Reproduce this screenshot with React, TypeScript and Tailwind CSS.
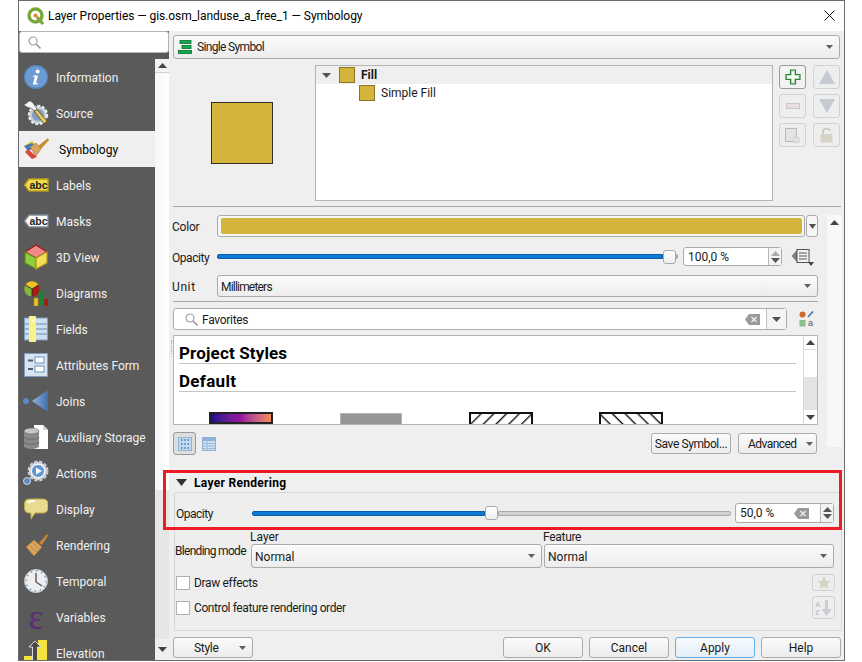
import type { ReactNode } from "react";

const GOLD = "#d4b43a";

const Caret = ({ up = false, color = "#505050", w = 9, h = 5 }: { up?: boolean; color?: string; w?: number; h?: number }) => (
  <svg width={w} height={h} viewBox="0 0 9 5" preserveAspectRatio="none" className="shrink-0">
    <path d={up ? "M4.5 0 L9 5 L0 5 Z" : "M0 0 L9 0 L4.5 5 Z"} fill={color} />
  </svg>
);

const Combo = ({ children, className = "" }: { children: ReactNode; className?: string }) => (
  <div className={`flex items-center rounded-[3px] border border-[#ababab] bg-linear-to-b from-[#fbfbfb] to-[#ececec] pr-[6px] ${className}`}>
    <div className="flex min-w-0 flex-1 items-center gap-[3px] whitespace-nowrap">{children}</div>
    <Caret color="#606060" w={7} h={4} />
  </div>
);

const Btn = ({ label, className = "" }: { label: string; className?: string }) => (
  <div className={`flex h-[21px] w-[80px] items-center justify-center whitespace-nowrap rounded-[3px] border border-[#ababab] bg-linear-to-b from-[#fbfbfb] to-[#ececec] ${className}`}>
    {label}
  </div>
);

const Slider = ({ fill, width }: { fill: number; width: string }) => (
  <div className={`flex h-[16px] shrink-0 items-center ${width}`}>
    <div className="h-[5px] rounded-l-[2px] border border-[#0b5da8] bg-[#0f7ad6]" style={{ width: fill }} />
    <div className="z-10 h-[14px] w-[13px] shrink-0 rounded-[3px] border border-[#a9a9a9] bg-linear-to-b from-white to-[#f0f0f0]" />
    <div className="h-[5px] flex-1 rounded-r-[2px] border border-[#a9a9a9] bg-[#d2d2d2]" />
  </div>
);

const Clear = () => (
  <svg width="15" height="11" viewBox="0 0 15 11" className="shrink-0">
    <path d="M4 0 H15 V11 H4 L0 5.5 Z" fill="#9a9a9a" />
    <path d="M6.5 3 L11.5 8 M11.5 3 L6.5 8" stroke="#efefef" strokeWidth="1.4" />
  </svg>
);

const SpinBox = ({ value, clear, className }: { value: string; clear?: boolean; className: string }) => (
  <div className={`flex items-stretch rounded-[3px] border border-[#ababab] bg-white ${className}`}>
    <div className="flex flex-1 items-center justify-between pl-[4px] pr-[11px]">
      <span className="whitespace-nowrap">{value}</span>
      {clear && <Clear />}
    </div>
    <div className="flex w-[13px] flex-col items-center justify-center gap-[2px] border-l border-[#b8b8b8] bg-[#f3f3f3]">
      <Caret up w={9} color={clear ? "#555" : "#aaa"} />
      <Caret w={9} color="#555" />
    </div>
  </div>
);

const ToolBtn = ({ children, active, className = "h-[24px] w-[27px]" }: { children: ReactNode; active?: boolean; className?: string }) => (
  <div className={`flex items-center justify-center rounded-[3px] border ${active ? "border-[#9a9a9a] bg-[#f2f2f2]" : "border-[#d2d2d2] bg-[#eeeeee]"} ${className}`}>
    {children}
  </div>
);

const Magnifier = () => (
  <svg width="13" height="13" viewBox="0 0 13 13" className="shrink-0">
    <circle cx="5" cy="5" r="4" fill="none" stroke="#9c9c9c" strokeWidth="1.2" />
    <path d="M8 8 L12.5 12.5" stroke="#9c9c9c" strokeWidth="1.6" />
  </svg>
);

const IconInfo = () => (
  <svg width="24" height="24" viewBox="0 0 24 24">
    <circle cx="12" cy="12" r="12" fill="#6b9bd0" />
    <circle cx="12" cy="12" r="11.5" fill="none" stroke="#4a7cb5" />
    <circle cx="13.6" cy="6.5" r="2" fill="#fff" />
    <path d="M9.5 10.5 H14 L12 18 H14 L13.4 19.5 H8.8 L10.8 12 H9.2 Z" fill="#fff" />
  </svg>
);

const IconSource = () => (
  <svg width="26" height="26" viewBox="0 0 26 26">
    <circle cx="15" cy="15" r="9" fill="#c3ccd6" stroke="#e8ecf0" strokeWidth="2.4" strokeDasharray="3 1.6" />
    <circle cx="15" cy="15" r="6" fill="#7f9ec0" />
    <path d="M1 3 C3 6 4 1 7 1 C11 2 11 6 14 9 L12 11 C9 8 6 8 4 7 C2 6 1 5 1 3 Z" fill="#f6f6f6" stroke="#333" strokeWidth="0.5" />
    <path d="M11 11 L14 9.5 L24 21 L21 24 Z" fill="#e3c565" stroke="#57481c" strokeWidth="0.8" />
  </svg>
);

const IconSymbology = () => (
  <svg width="27" height="22" viewBox="0 0 27 22">
    <path d="M1 8 L9 3 L14 8 L5 13 Z" fill="#e6c92e" />
    <path d="M1 8 L5 13 L13 9 L9 5 Z" fill="#3d78c0" />
    <path d="M2 14 L5 11 L14 19 L9 21 Z" fill="#d8473f" />
    <path d="M7 9 L13 5 L18 11 L13 18 Z" fill="#d9a45e" stroke="#a8753a" strokeWidth="0.6" />
    <path d="M15 8 L25 0 L26 2 L18 11 Z" fill="#c98a34" />
  </svg>
);

const IconTag = ({ bg, stroke }: { bg: string; stroke: string }) => (
  <svg width="25" height="14" viewBox="0 0 25 14">
    <path d="M5 1 H24 V13 H5 L0.5 7 Z" fill={bg} stroke={stroke} strokeWidth="1.4" strokeLinejoin="round" />
    <text x="14.5" y="10.5" textAnchor="middle" fontFamily="Liberation Sans, sans-serif" fontWeight="700" fontSize="10.5" fill="#222">abc</text>
  </svg>
);

const IconCube = () => (
  <svg width="24" height="26" viewBox="0 0 24 26">
    <path d="M12 1 L23 8 L12 14 L1 8 Z" fill="#f08a8a" stroke="#a31515" strokeWidth="1.2" />
    <path d="M1 8 L12 14 V25 L1 19 Z" fill="#8fce3a" stroke="#5b8a20" strokeWidth="1.2" />
    <path d="M23 8 L12 14 V25 L23 19 Z" fill="#f3dd5a" stroke="#b59a1e" strokeWidth="1.2" />
  </svg>
);

const IconDiagrams = () => (
  <svg width="24" height="25" viewBox="0 0 24 25">
    <circle cx="8" cy="8" r="7.5" fill="#a81c12" />
    <path d="M8 8 L1.5 4 A7.5 7.5 0 0 1 14.5 4 Z" fill="#eec425" />
    <path d="M8 8 L1.5 4 A7.5 7.5 0 0 0 8 15.5 Z" fill="#7fb83a" />
    <path d="M8 8 L14.5 4 M8 8 L1.5 4 M8 8 V15.5" stroke="#222" strokeWidth="0.8" />
    <rect x="10" y="17" width="4" height="8" fill="#eec425" stroke="#b18d12" strokeWidth="0.6" />
    <rect x="15" y="10" width="4" height="15" fill="#20813a" />
    <rect x="20" y="18" width="4" height="7" fill="#9b2418" />
  </svg>
);

const IconFields = () => (
  <svg width="24" height="26" viewBox="0 0 24 26">
    <rect x="0.5" y="2" width="23" height="22" fill="#cfdff0" stroke="#7f9dbf" />
    <path d="M1 8 H23 M1 13 H23 M1 18 H23" stroke="#8aa6c6" strokeWidth="1.4" />
    <rect x="5" y="0" width="7" height="26" fill="#f8f28a" />
    <rect x="7.5" y="3.5" width="2" height="2" fill="#fff" />
  </svg>
);

const IconForm = () => (
  <svg width="24" height="24" viewBox="0 0 24 24">
    <rect x="0.5" y="0.5" width="23" height="23" fill="#d7e3f0" stroke="#7f9dbf" />
    <path d="M4 7.5 H9 M4 16 H9" stroke="#4d5d70" strokeWidth="2" />
    <rect x="11" y="4" width="9" height="6" fill="#fff" stroke="#6f93bc" />
    <rect x="11" y="13" width="9" height="6" fill="#fff" stroke="#6f93bc" />
  </svg>
);

const IconJoins = () => (
  <svg width="26" height="24" viewBox="0 0 26 24">
    <circle cx="3" cy="12" r="3" fill="#5d8ac0" />
    <defs>
      <linearGradient id="joinCone" x1="0" x2="1" y1="0" y2="0">
        <stop offset="0" stopColor="#8fb2d8" />
        <stop offset="1" stopColor="#3f70ab" />
      </linearGradient>
    </defs>
    <path d="M9 12 L25 1 V23 Z" fill="url(#joinCone)" />
  </svg>
);

const IconStorage = () => (
  <svg width="26" height="26" viewBox="0 0 26 26">
    <path d="M11 1 H20 L25 6 V25 H11 Z" fill="#fff" />
    <path d="M20 1 V6 H25" fill="#d5d5d5" />
    <path d="M1 7 V22 C1 26 16 26 16 22 V7 Z" fill="#8a8a8a" />
    <ellipse cx="8.5" cy="7" rx="7.5" ry="3" fill="#c5c5c5" stroke="#666" strokeWidth="0.6" />
    <path d="M1 13 C1 16 16 16 16 13 M1 18 C1 21 16 21 16 18" fill="none" stroke="#5f5f5f" strokeWidth="0.8" />
  </svg>
);

const IconActions = () => (
  <svg width="26" height="26" viewBox="0 0 26 26">
    <circle cx="15" cy="11" r="9" fill="#e2e8ee" stroke="#c5ccd3" strokeWidth="3" strokeDasharray="3.2 1.6" />
    <circle cx="15" cy="11" r="6.5" fill="#5f95d2" stroke="#fff" strokeWidth="1" />
    <path d="M13 7.5 L19 11 L13 14.5 Z" fill="#fff" />
    <circle cx="4" cy="21" r="3.5" fill="#5d8ac0" stroke="#cdd8e4" strokeWidth="1" />
  </svg>
);

const IconDisplay = () => (
  <svg width="24" height="22" viewBox="0 0 24 22">
    <path d="M5 1 H19 C22 1 24 3 24 6 V10 C24 13 22 15 19 15 H11 L7 21 L7 15 H5 C2 15 0.5 13 0.5 10 V6 C0.5 3 2 1 5 1 Z" fill="#e8dc8f" stroke="#bba94a" />
    <path d="M4 5 C5 3 9 3 11 3" fill="none" stroke="#fff" strokeWidth="2" />
  </svg>
);

const IconRendering = () => (
  <svg width="23" height="23" viewBox="0 0 23 23">
    <path d="M14 9 L22 0 L23 1.5 L17 11 Z" fill="#c88a34" />
    <path d="M1 13 L9 6 L17 13 L9 22 Z" fill="#d9a45e" stroke="#a8753a" strokeWidth="0.8" />
    <path d="M5 12 L12 18 M8 9 L14 15" stroke="#b88444" strokeWidth="0.8" />
  </svg>
);

const IconClock = () => (
  <svg width="24" height="24" viewBox="0 0 24 24">
    <circle cx="12" cy="12" r="11.5" fill="#eeeeee" stroke="#bcc4cc" />
    <circle cx="12" cy="12" r="10" fill="none" stroke="#6e94c2" strokeWidth="1.5" strokeDasharray="1.4 3.8" />
    <path d="M12 4 V13 L18 17" fill="none" stroke="#555" strokeWidth="1.4" />
  </svg>
);

const IconVariables = () => (
  <span className="font-['Liberation_Serif',serif] text-[36px] leading-[20px] text-[#5c2d72]">ε</span>
);

const IconElevation = () => (
  <svg width="26" height="26" viewBox="0 0 26 26">
    <rect x="15" y="0" width="9" height="26" fill="#f5e23d" />
    <rect x="1" y="16" width="9" height="10" fill="#f5e23d" />
    <path d="M12 1 L18 7 H14.5 V26 H9.5 V7 H6 Z" fill="#4a4a4a" stroke="#e8e8e8" strokeWidth="0.9" />
  </svg>
);

const NAV: Array<{ label: string; icon: ReactNode }> = [
  { label: "Information", icon: <IconInfo /> },
  { label: "Source", icon: <IconSource /> },
  { label: "Symbology", icon: <IconSymbology /> },
  { label: "Labels", icon: <IconTag bg="#f2dc4a" stroke="#b59c1e" /> },
  { label: "Masks", icon: <IconTag bg="#ffffff" stroke="#7d8894" /> },
  { label: "3D View", icon: <IconCube /> },
  { label: "Diagrams", icon: <IconDiagrams /> },
  { label: "Fields", icon: <IconFields /> },
  { label: "Attributes Form", icon: <IconForm /> },
  { label: "Joins", icon: <IconJoins /> },
  { label: "Auxiliary Storage", icon: <IconStorage /> },
  { label: "Actions", icon: <IconActions /> },
  { label: "Display", icon: <IconDisplay /> },
  { label: "Rendering", icon: <IconRendering /> },
  { label: "Temporal", icon: <IconClock /> },
  { label: "Variables", icon: <IconVariables /> },
  { label: "Elevation", icon: <IconElevation /> },
];

const Sidebar = () => (
  <div className="flex w-[150px] shrink-0 flex-col bg-[#5a5a5a]">
    <div className="flex h-[22px] items-center rounded-[3px] border border-[#b5b5b5] bg-white pl-[8px]">
      <Magnifier />
    </div>
    <div className="flex min-h-0 flex-1 pt-[6px]">
      <div className="w-[136px] shrink-0 overflow-hidden">
        {NAV.map((item) => {
          const selected = item.label === "Symbology";
          return (
            <div key={item.label} className={`flex h-[36px] items-center ${selected ? "bg-[#efefef] text-black" : "text-[#f0f0f0]"}`}>
              <div className="mr-[3px] flex w-[34px] shrink-0 justify-center">{item.icon}</div>
              <span className={`pt-[1px] whitespace-nowrap ${selected ? "ml-[3px]" : ""}`}>{item.label}</span>
            </div>
          );
        })}
      </div>
      <div className="flex w-[14px] shrink-0 flex-col bg-[#e6e6e6]">
        <div className="flex h-[14px] items-center justify-center border-b border-[#cfcfcf] bg-[#f2f2f2]"><Caret up color="#444" /></div>
        <div className="h-[417px] bg-linear-to-r from-[#f6f6f6] to-white" />
        <div className="flex-1" />
        <div className="flex h-[21px] items-center justify-center bg-[#efefef]"><Caret color="#444" /></div>
      </div>
    </div>
  </div>
);

const SymbolTree = () => (
  <div className="h-[136px] w-[458px] border border-[#b4b4b4] bg-white">
    <div className="flex h-[18px] items-center bg-[#efefef]">
      <div className="ml-[6px] mr-[8px]"><Caret color="#555" /></div>
      <div className="h-[16px] w-[16px] border border-[#8a7428]" style={{ background: GOLD }} />
      <b className="ml-[6px]">Fill</b>
    </div>
    <div className="flex h-[18px] items-center pl-[43px]">
      <div className="h-[16px] w-[16px] border border-[#8a7428]" style={{ background: GOLD }} />
      <span className="ml-[6px]">Simple Fill</span>
    </div>
  </div>
);

const SymbolButtons = () => (
  <div className="ml-[6px] grid h-fit grid-cols-[27px_27px] gap-x-[7px] gap-y-[5px]">
    <ToolBtn active>
      <svg width="16" height="16" viewBox="0 0 16 16">
        <path d="M5.5 1 H10.5 V5.5 H15 V10.5 H10.5 V15 H5.5 V10.5 H1 V5.5 H5.5 Z" fill="#c5e5c5" stroke="#2f7d3b" strokeWidth="1.2" />
        <path d="M8 3 V13 M3 8 H13" stroke="#fff" strokeWidth="1.5" />
      </svg>
    </ToolBtn>
    <ToolBtn>
      <svg width="16" height="14" viewBox="0 0 16 14"><path d="M8 0 L16 14 H0 Z" fill="#c5cbd0" /></svg>
    </ToolBtn>
    <ToolBtn>
      <svg width="14" height="6" viewBox="0 0 14 6"><rect x="0.5" y="0.5" width="13" height="5" fill="#e6e0e0" stroke="#cfc5c5" /></svg>
    </ToolBtn>
    <ToolBtn>
      <svg width="16" height="14" viewBox="0 0 16 14"><path d="M0 0 H16 L8 14 Z" fill="#c5cbd0" /></svg>
    </ToolBtn>
    <ToolBtn>
      <svg width="15" height="15" viewBox="0 0 15 15">
        <rect x="0.5" y="0.5" width="11" height="13" fill="#e3e3e3" stroke="#b9b9b9" />
        <rect x="9" y="9.5" width="5" height="5" fill="#dfe6d8" stroke="#d0d0d0" />
      </svg>
    </ToolBtn>
    <ToolBtn>
      <svg width="13" height="16" viewBox="0 0 13 16">
        <path d="M3 7 V4 C3 1 10 1 10 4" fill="none" stroke="#c9c5bb" strokeWidth="1.6" />
        <rect x="0.5" y="7" width="12" height="8.5" rx="1" fill="#d7d3c7" />
      </svg>
    </ToolBtn>
  </div>
);

const Hatch = ({ id, flip }: { id: string; flip?: boolean }) => (
  <svg width="64" height="12" viewBox="0 0 64 12" className="shrink-0">
    <defs>
      <pattern id={id} width="9" height="9" patternUnits="userSpaceOnUse" patternTransform={flip ? "rotate(45)" : "rotate(-45)"}>
        <rect width="9" height="1.4" fill="#111" />
      </pattern>
    </defs>
    <rect x="1" y="1" width="62" height="14" fill={`url(#${id})`} stroke="#111" strokeWidth="2" />
  </svg>
);

const SymbolList = () => (
  <div className="relative mt-[5px] flex h-[90px] border border-[#b4b4b4] bg-white">
    <div className="absolute -left-[3px] top-[4px] h-[14px] border-l border-dotted border-[#a8a8a8]" />
    <div className="min-w-0 flex-1 overflow-hidden pl-[5px] pr-[7px]">
      <div className="h-[28px] border-b border-[#c4c4c4] pt-[7px] text-[17px] font-bold leading-[20px] tracking-[0.15px] text-black">Project Styles</div>
      <div className="h-[28px] border-b border-[#c4c4c4] pt-[7px] text-[17px] font-bold leading-[20px] tracking-[0.3px] text-black">Default</div>
      <div className="mt-[20px] flex items-start">
        <div className="ml-[30px] h-[12px] w-[64px] border-2 border-[#222] bg-linear-to-r from-[#1d0a8c] via-[#9c0f9e] to-[#f58a55]" />
        <div className="ml-[67px] mt-[1px] h-[12px] w-[62px] border border-[#b5b5b5] bg-[#959595]" />
        <div className="ml-[67px]"><Hatch id="hatchA" /></div>
        <div className="ml-[66px]"><Hatch id="hatchB" flip /></div>
      </div>
    </div>
    <div className="flex w-[14px] shrink-0 flex-col border-l border-[#d8d8d8] bg-white">
      <div className="flex h-[14px] items-center justify-center border-b border-[#dcdcdc]"><Caret up color="#444" /></div>
      <div className="h-[27px]" />
      <div className="flex-1 bg-[#e3e3e3]" />
      <div className="flex h-[14px] items-center justify-center"><Caret color="#444" /></div>
    </div>
  </div>
);

const SymbolForm = () => (
  <div className="w-[645px] shrink-0">
    <div className="mt-[8px] flex h-[22px] items-center">
      <span className="-ml-px w-[45px] shrink-0 pt-[2px] tracking-[-0.2px]">Color</span>
      <div className="flex h-[22px] w-[588px] shrink-0 items-center rounded-[3px] border border-[#ababab] bg-[#f6f6f6] pl-[3px] pr-[2px]">
        <div className="h-[16px] flex-1 rounded-[2px]" style={{ background: GOLD }} />
      </div>
      <div className="ml-[1px] flex h-[22px] flex-1 items-center justify-center rounded-[3px] border border-[#ababab] bg-[#f6f6f6]"><Caret w={7} /></div>
    </div>
    <div className="mt-[10px] flex h-[19px] items-center">
      <span className="-ml-px w-[45px] shrink-0 pt-[2px] tracking-[-0.45px]">Opacity</span>
      <Slider fill={448} width="w-[461px]" />
      <SpinBox value="100,0 %" className="ml-[5px] h-[19px] w-[99px]" />
      <svg width="24" height="18" viewBox="0 0 24 18" className="ml-[9px] shrink-0">
        <path d="M6 2 L0.5 8 L6 14 Z" fill="#7d7d7d" />
        <rect x="6" y="1.5" width="12" height="13" fill="#f2f2f2" stroke="#555" />
        <path d="M8 5 H16 M8 8 H16 M8 11 H16" stroke="#555" />
        <path d="M17 14 H23 L20 18 Z" fill="#444" />
      </svg>
    </div>
    <div className="mt-[9px] flex h-[22px] items-center">
      <span className="-ml-px w-[45px] shrink-0 pt-[2px] tracking-[0.6px]">Unit</span>
      <Combo className="h-[22px] flex-1 pl-[3px]"><span className="pt-px tracking-[-0.8px]">Millimeters</span></Combo>
    </div>
    <div className="mt-[4px] h-px bg-[#a8a8a8]" />
    <div className="mt-[6px] flex h-[22px] items-center">
      <div className="flex h-[22px] w-[614px] items-stretch rounded-[3px] border border-[#ababab] bg-white">
        <div className="flex flex-1 items-center pl-[11px] pr-[6px]">
          <Magnifier />
          <span className="ml-[4px] flex-1 pt-[1px] tracking-[-0.3px]">Favorites</span>
          <Clear />
        </div>
        <div className="flex w-[20px] items-center justify-center border-l border-[#c4c4c4] bg-[#f4f4f4]"><Caret /></div>
      </div>
      <svg width="16" height="16" viewBox="0 0 16 16" className="ml-[12px] shrink-0">
        <circle cx="3.5" cy="3.5" r="3" fill="#cf6a2e" />
        <rect x="0.5" y="9" width="6" height="6.5" fill="#8bbf8f" />
        <path d="M9 6 L14 0.5" stroke="#3f74b0" strokeWidth="1.6" />
        <text x="9" y="15" fontFamily="Liberation Sans, sans-serif" fontSize="9" fill="#555">a</text>
      </svg>
    </div>
    <SymbolList />
    <div className="mt-[7px] flex h-[23px] items-center">
      <ToolBtn active className="h-[23px] w-[23px] !bg-[#dedede]">
        <svg width="14" height="14" viewBox="0 0 14 14">
          <rect x="0.5" y="0.5" width="13" height="13" fill="#c4d9ee" stroke="#8eb1d6" />
          <path d="M3 3 H4.5 M6.3 3 H7.8 M9.6 3 H11 M3 7 H4.5 M6.3 7 H7.8 M9.6 7 H11 M3 11 H4.5 M6.3 11 H7.8 M9.6 11 H11" stroke="#5d8dc2" strokeWidth="2" />
        </svg>
      </ToolBtn>
      <svg width="14" height="14" viewBox="0 0 14 14" className="ml-[6px]">
        <rect x="0.5" y="0.5" width="13" height="13" fill="#cfe0f1" stroke="#8eb1d6" />
        <rect x="1" y="1" width="12" height="3" fill="#8eb1d6" />
        <path d="M1 6.5 H13 M1 9 H13 M1 11.5 H13 M5 4 V13" stroke="#9cbcdc" />
      </svg>
      <div className="ml-auto flex items-center gap-[7px] pr-px">
        <Btn label="Save Symbol..." className="w-[78px] tracking-[-0.4px]" />
        <Combo className="h-[21px] w-[79px] pl-[9px] !pr-[3px]"><span className="tracking-[-0.55px]">Advanced</span></Combo>
      </div>
    </div>
  </div>
);

const LayerRendering = () => (
  <div className="ml-[1px] flex flex-col">
    <div className="flex h-[19px] items-center pl-[2px]">
      <Caret w={11} h={7} color="#333" />
      <b className="ml-[7px] tracking-[0.3px] text-black">Layer Rendering</b>
    </div>
    <div className="h-[139px] w-[668px] rounded-[2px] border border-[#d6d6d6] bg-[#eeeeee]">
      <div className="mt-[10px] flex h-[20px] items-center pl-px">
        <span className="w-[76px] shrink-0 pt-[2px] tracking-[-0.5px]">Opacity</span>
        <Slider fill={233} width="w-[479px]" />
        <SpinBox value="50,0 %" clear className="ml-[4px] h-[20px] w-[99px]" />
      </div>
      <div className="mt-[7px] flex items-end">
        <span className="mb-[11px] w-[76px] shrink-0 whitespace-nowrap tracking-[-0.7px]">Blending mode</span>
        <div className="w-[291px]">
          <div className="-ml-px h-[14px] leading-[14px]">Layer</div>
          <Combo className="h-[24px] pl-[3px]"><span className="pt-px">Normal</span></Combo>
        </div>
        <div className="ml-[2px] w-[290px]">
          <div className="-ml-px h-[14px] leading-[14px] tracking-[-0.3px]">Feature</div>
          <Combo className="h-[24px] pl-[3px]"><span className="pt-px">Normal</span></Combo>
        </div>
      </div>
      <div className="mt-[6px] flex h-[17px] items-center pl-px">
        <div className="h-[14px] w-[14px] border border-[#b0b0b0] bg-white" />
        <span className="ml-[4px] tracking-[-0.33px]">Draw effects</span>
        <ToolBtn className="ml-auto mr-[6px] h-[17px] w-[23px]">
          <svg width="14" height="13" viewBox="0 0 14 13"><path d="M7 0 L9 4.5 L14 5 L10.2 8 L11.4 13 L7 10.4 L2.6 13 L3.8 8 L0 5 L5 4.5 Z" fill="#d8d4c4" /></svg>
        </ToolBtn>
      </div>
      <div className="mt-[5px] flex h-[23px] items-center pl-px">
        <div className="h-[14px] w-[14px] border border-[#b0b0b0] bg-white" />
        <span className="ml-[4px] tracking-[-0.4px]">Control feature rendering order</span>
        <ToolBtn className="ml-auto mr-[6px] h-[23px] w-[23px]">
          <svg width="17" height="16" viewBox="0 0 17 16">
            <text x="0" y="7" fontFamily="Liberation Sans, sans-serif" fontSize="7.5" fontWeight="700" fill="#c4c4c4">A</text>
            <text x="0" y="15" fontFamily="Liberation Sans, sans-serif" fontSize="7.5" fontWeight="700" fill="#c4c4c4">Z</text>
            <path d="M10 0 H13 V9 H17 L11.5 16 L6.5 9 H10 Z" fill="#c8cdd2" />
          </svg>
        </ToolBtn>
      </div>
    </div>
  </div>
);

const RightPane = () => (
  <div className="flex min-w-0 flex-1 flex-col pl-[4px] pt-[4px]">
    <Combo className="h-[24px] w-[667px] pl-[4px]">
      <svg width="15" height="14" viewBox="0 0 15 14" className="shrink-0">
        <rect x="2" y="0.5" width="11" height="3" fill="#11a84e" stroke="#0a6e32" strokeWidth="0.8" />
        <rect x="4" y="5.5" width="9" height="3" fill="#11a84e" stroke="#0a6e32" strokeWidth="0.8" />
        <rect x="0.5" y="10.5" width="13" height="3" fill="#11a84e" stroke="#0a6e32" strokeWidth="0.8" />
      </svg>
      <span className="ml-px tracking-[-0.65px]">Single Symbol</span>
    </Combo>
    <div className="mt-[6px] flex h-[136px]">
      <div className="flex w-[142px] shrink-0 items-center pl-[38px]">
        <div className="h-[62px] w-[62px] border border-[#2d2d2d]" style={{ background: GOLD }} />
      </div>
      <SymbolTree />
      <SymbolButtons />
    </div>
    <div className="mt-[5px] h-px w-[668px] bg-[#a8a8a8]" />
    <div className="flex h-[266px]">
      <SymbolForm />
      <div className="ml-[9px] mt-[8px] flex h-[232px] w-[15px] flex-col bg-[#f8f8f8]">
        <div className="flex h-[14px] items-center justify-center"><Caret up color="#444" /></div>
      </div>
    </div>
    <LayerRendering />
    <div className="mt-[6px] flex items-center">
      <Combo className="h-[21px] w-[80px] pl-[20px]"><span className="tracking-[-0.3px]">Style</span></Combo>
      <div className="ml-auto flex gap-[6px] pr-[3px]">
        <Btn label="OK" />
        <Btn label="Cancel" />
        <Btn label="Apply" className="!border-[#63aee6] !from-[#f6fafd] !to-[#e4eff8]" />
        <Btn label="Help" />
      </div>
    </div>
  </div>
);

export default function App() {
  return (
    <div className="relative h-[662px] w-[862px] overflow-hidden bg-white pl-[18px] font-['Roboto',sans-serif] text-[12px] leading-none text-[#1a1a1a]">
      <div className="flex h-[661px] w-[827px] flex-col border-r border-b border-t border-l border-[#6c6c6c] bg-[#efefef]">
        <div className="flex h-[30px] shrink-0 items-center bg-white pl-[8px] pr-[8px]">
          <svg width="18" height="18" viewBox="0 0 18 18" className="shrink-0">
            <circle cx="8.5" cy="8.5" r="6.5" fill="none" stroke="#7aa63c" strokeWidth="3.4" />
            <path d="M10 10 L16 17" stroke="#7aa63c" strokeWidth="3.2" />
            <circle cx="8.5" cy="8.5" r="2" fill="#e8833a" />
          </svg>
          <span className="ml-[3px] tracking-[-0.05px] text-black">Layer Properties — gis.osm_landuse_a_free_1 — Symbology</span>
          <svg width="11" height="11" viewBox="0 0 11 11" className="ml-auto mr-[1px] -mt-[2px]">
            <path d="M0.5 0.5 L10.5 10.5 M10.5 0.5 L0.5 10.5" stroke="#111" strokeWidth="1" />
          </svg>
        </div>
        <div className="flex min-h-0 flex-1">
          <Sidebar />
          <RightPane />
        </div>
      </div>
      <div className="absolute left-[163px] top-[470px] h-[60px] w-[679px] border-[3px] border-[#ed1c24]" />
    </div>
  );
}
